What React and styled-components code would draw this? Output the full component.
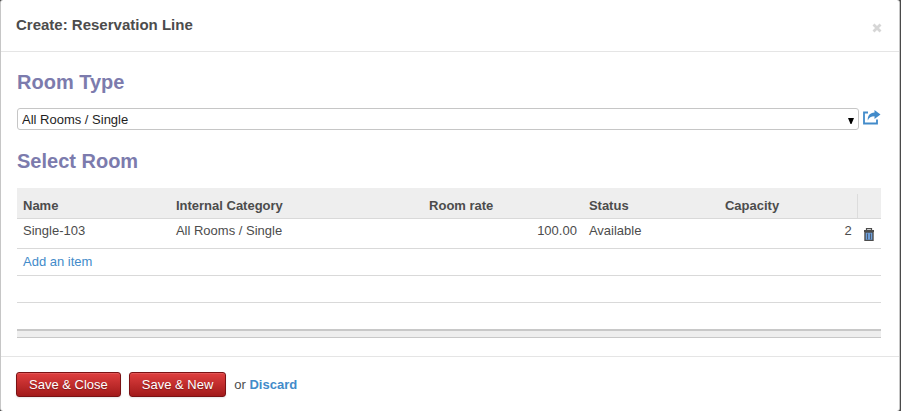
import React from "react";
import styled, { createGlobalStyle } from "styled-components";

const GlobalStyle = createGlobalStyle`
  *, *::before, *::after { box-sizing: border-box; }
  body {
    margin: 0;
    background: #4a4a4a;
    color: #4c4c4c;
    font: 13px/18px "Liberation Sans", Arial, sans-serif;
  }
  button, select { font: inherit; }
`;

const Dialog = styled.section`
  margin-right: 1px;
  background: #fff;
  border: solid #c6c6c6;
  border-width: 0 1px;
  border-radius: 3px;
`;

const Header = styled.header`
  display: flex;
  align-items: center;
  justify-content: space-between;
  height: 52px;
  padding: 0 14px 0 15px;
  border-bottom: 1px solid #e5e5e5;
`;

const Title = styled.h1`
  margin: 0 0 2px;
  font-size: 15px;
  line-height: 20px;
`;

const CloseButton = styled.button`
  display: flex;
  align-items: center;
  justify-content: center;
  width: 16px;
  height: 16px;
  padding: 0;
  margin-top: 5px;
  border: 0;
  background: none;
  color: #d6d6d6;
`;

const Body = styled.div`
  padding: 16px 18px 18px 16px;
`;

const Heading = styled.h2`
  margin: 0;
  color: #7c7bad;
  font-size: 20px;
  line-height: 28px;
`;

const SelectRow = styled.div`
  display: flex;
  align-items: flex-start;
  gap: 4px;
  margin: 12px 0 17px;
`;

const SelectBox = styled.div`
  position: relative;
  flex: 1;
`;

const Select = styled.select`
  display: block;
  width: 100%;
  height: 22px;
  padding: 2px 20px 0 4px;
  appearance: none;
  background: #fff;
  color: #1e1e1e;
  border: 1px solid #c6c6c6;
  border-radius: 3px;
`;

const SelectArrow = styled.svg`
  position: absolute;
  right: 5px;
  top: 10px;
  pointer-events: none;
`;

const IconButton = styled.button`
  display: block;
  padding: 0;
  margin: ${(p) => (p.$inRow ? "0 auto" : "2px 0 0")};
  border: 0;
  background: none;
  color: ${(p) => (p.$inRow ? "#4c4c4c" : "#428bca")};

  svg { display: block; }
`;

const Table = styled.table`
  width: 100%;
  margin-top: 13px;
  table-layout: fixed;
  border-collapse: separate;
  border-spacing: 0;
`;

const Column = styled.col`
  width: ${(p) => p.$width};
`;

const HeadCell = styled.th`
  height: 31px;
  padding: 5px 6px 0;
  background: #eee;
  border-bottom: 1px solid #d9d9d9;
  text-align: left;
`;

const HeadDivider = styled.div`
  height: 24px;
  margin: 1px 0 0 -7px;
  border-left: 1px solid #dcdcdc;
`;

const Cell = styled.td`
  height: ${(p) => (p.$tall ? "30px" : "27px")};
  padding: ${(p) => (p.$tall ? "3px 6px 8px" : "4px 6px")};
  border-bottom: 1px solid #d9d9d9;
  text-align: ${(p) => (p.$numeric ? "right" : "left")};
  vertical-align: top;
`;

const IconCell = styled(Cell)`
  padding: 9px 0 0;
`;

const LastCell = styled(Cell)`
  height: 26px;
  border-bottom: 0;
`;

const FootCell = styled.td`
  height: 9px;
  padding: 0;
  background: #eee;
  border-top: 2px solid #c8c8c8;
  border-bottom: 1px solid #c8c8c8;
`;

const Link = styled.a`
  color: #428bca;
  text-decoration: none;
  font-weight: ${(p) => (p.$bold ? "bold" : "normal")};
`;

const Footer = styled.footer`
  display: flex;
  align-items: center;
  gap: 8px;
  padding: 15px 15px 14px;
  border-top: 1px solid #e5e5e5;
`;

const ActionButton = styled.button`
  height: 25px;
  padding: 0 12px;
  color: #fff;
  background: linear-gradient(#df3f3f, #a21a1a);
  border: 1px solid #7a1214;
  border-radius: 3px;
  box-shadow: 0 1px 2px rgba(0, 0, 0, 0.1), inset 0 1px 0 rgba(255, 255, 255, 0.12);
  text-shadow: 0 1px 1px rgba(0, 0, 0, 0.3);
`;

const room = {
  name: "Single-103",
  category: "All Rooms / Single",
  rate: "100.00",
  status: "Available",
  capacity: 2,
};

function CrossIcon() {
  return (
    <svg width="10" height="10" viewBox="0 0 10 10" aria-hidden="true">
      <path d="M1.5 1.5l7 7M8.5 1.5l-7 7" stroke="currentColor" strokeWidth="2.8" />
    </svg>
  );
}

function ShareIcon() {
  return (
    <svg width="18" height="15" viewBox="0 0 18 15" aria-hidden="true">
      <path d="M5 2.5H1V13.5H14V9.5" fill="none" stroke="currentColor" strokeWidth="1.8" />
      <path d="M11.5 0L17.5 4.5L11.5 9V6.3C8 6.3 6 7.5 4.8 10.5C4.4 6 6.8 2.8 11.5 2.6Z" fill="currentColor" />
    </svg>
  );
}

function TrashIcon() {
  return (
    <svg width="10" height="13" viewBox="0 0 10 13" aria-hidden="true">
      <path d="M2.5 2V0.7H7.5V2" fill="none" stroke="currentColor" strokeWidth="1.2" />
      <path d="M0 2h10v2H0z" fill="currentColor" />
      <path d="M1 4h8v8.5H1z" fill="#6ea0dc" stroke="currentColor" strokeWidth="1.4" />
      <path d="M3.5 5.5v6M6.5 5.5v6" stroke="#4c5c74" strokeWidth="1" />
    </svg>
  );
}

export default function App() {
  return (
    <>
      <GlobalStyle />
      <Dialog role="dialog" aria-labelledby="dialog-title">
        <Header>
          <Title id="dialog-title">Create: Reservation Line</Title>
          <CloseButton type="button" aria-label="Close">
            <CrossIcon />
          </CloseButton>
        </Header>
        <Body>
          <Heading>
            <label htmlFor="room-type">Room Type</label>
          </Heading>
          <SelectRow>
            <SelectBox>
              <Select id="room-type" defaultValue="single">
                <option value="single">All Rooms / Single</option>
              </Select>
              <SelectArrow width="6" height="6" viewBox="0 0 6 6" aria-hidden="true">
                <path d="M0 0h6L3.5 6h-1z" fill="#000" />
              </SelectArrow>
            </SelectBox>
            <IconButton type="button" aria-label="Open room type">
              <ShareIcon />
            </IconButton>
          </SelectRow>
          <Heading id="select-room">Select Room</Heading>
          <Table aria-labelledby="select-room">
            <colgroup>
              <Column $width="17.7%" />
              <Column $width="29.3%" />
              <Column $width="18.5%" />
              <Column $width="15.75%" />
              <Column $width="16.05%" />
              <Column $width="auto" />
            </colgroup>
            <thead>
              <tr>
                <HeadCell scope="col">Name</HeadCell>
                <HeadCell scope="col">Internal Category</HeadCell>
                <HeadCell scope="col">Room rate</HeadCell>
                <HeadCell scope="col">Status</HeadCell>
                <HeadCell scope="col">Capacity</HeadCell>
                <HeadCell as="td">
                  <HeadDivider />
                </HeadCell>
              </tr>
            </thead>
            <tbody>
              <tr>
                <Cell $tall>{room.name}</Cell>
                <Cell $tall>{room.category}</Cell>
                <Cell $tall $numeric>{room.rate}</Cell>
                <Cell $tall>{room.status}</Cell>
                <Cell $tall $numeric>{room.capacity}</Cell>
                <IconCell $tall>
                  <IconButton $inRow type="button" aria-label={`Delete ${room.name}`}>
                    <TrashIcon />
                  </IconButton>
                </IconCell>
              </tr>
              <tr>
                <Cell colSpan={6}>
                  <Link href="#add">Add an item</Link>
                </Cell>
              </tr>
              <tr>
                <Cell colSpan={6} />
              </tr>
              <tr>
                <LastCell colSpan={6} />
              </tr>
            </tbody>
            <tfoot>
              <tr>
                <FootCell colSpan={6} />
              </tr>
            </tfoot>
          </Table>
        </Body>
        <Footer>
          <ActionButton type="button">Save &amp; Close</ActionButton>
          <ActionButton type="button">Save &amp; New</ActionButton>
          <span>
            or <Link $bold href="#discard">Discard</Link>
          </span>
        </Footer>
      </Dialog>
    </>
  );
}
